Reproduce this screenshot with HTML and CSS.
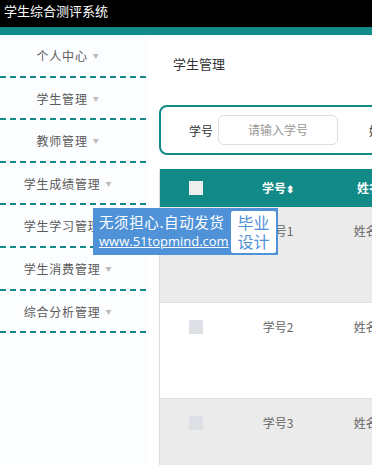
FILE: index.html
```html
<!DOCTYPE html>
<html lang="zh">
<head>
  <meta charset="UTF-8" />
  <title>学生综合测评系统</title>
  <link rel="stylesheet" href="styles.css">
</head>
<body>
  <div class="top">学生综合测评系统</div>
  <div class="band"></div>
  <div class="wrap">
    <ul class="menu">
      <li>个人中心<span class="caret">▼</span></li>
      <li>学生管理<span class="caret">▼</span></li>
      <li>教师管理<span class="caret">▼</span></li>
      <li>学生成绩管理<span class="caret">▼</span></li>
      <li>学生学习管理<span class="caret">▼</span></li>
      <li>学生消费管理<span class="caret">▼</span></li>
      <li>综合分析管理<span class="caret">▼</span></li>
    </ul>
    <div class="main">
      <div class="title">学生管理</div>
      <div class="search">
        <label>学号</label>
        <div class="input">请输入学号</div>
        <label>姓名</label>
        <div class="input">请输入姓名</div>
      </div>
      <div class="table">
        <div class="row head">
          <div class="cell"><span class="box"></span></div>
          <div class="cell">学号<span class="sort">⬍</span></div>
          <div class="cell">姓名</div>
        </div>
        <div class="row">
          <div class="cell"><span class="box"></span></div>
          <div class="cell">学号1</div>
          <div class="cell">姓名1</div>
        </div>
        <div class="row">
          <div class="cell"><span class="box"></span></div>
          <div class="cell">学号2</div>
          <div class="cell">姓名2</div>
        </div>
        <div class="row">
          <div class="cell"><span class="box"></span></div>
          <div class="cell">学号3</div>
          <div class="cell">姓名3</div>
        </div>
      </div>
    </div>
  </div>

  <div class="ad">
    <div class="ad-text">
      <div class="ad-line">无须担心.自动发货</div>
      <div class="ad-url">www.51topmind.com</div>
    </div>
    <div class="ad-tag">毕业<br>设计</div>
  </div>
</body>
</html>
```

FILE: styles.css
```css
* {
  margin: 0;
  padding: 0;
  box-sizing: border-box;
}

body {
  width: 372px;
  height: 465px;
  overflow: hidden;
  position: relative;
  background: #fff;
  font-family: "Noto Sans CJK SC", "Noto Sans", sans-serif;
  font-size: 12px;
  color: #555;
}

.top {
  height: 27px;
  line-height: 22px;
  padding-left: 4px;
  background: #000;
  color: #fff;
  font-size: 13px;
}

.band {
  height: 8px;
  background: #118a88;
}

.wrap {
  display: flex;
  width: 700px;
}

.menu {
  width: 150px;
  flex: none;
  padding-right: 4px;
  background: #fbfdff;
}

.menu li {
  list-style: none;
  height: 42.6px;
  line-height: 41px;
  text-align: center;
  padding-right: 10px;
  border-bottom: 2px dashed #118a88;
  color: #5a5a5a;
  letter-spacing: 0.8px;
}

.caret {
  font-size: 6px;
  color: #bbb;
  margin-left: 5px;
  vertical-align: 3px;
}

.main {
  flex: 1;
  padding-left: 9px;
}

.title {
  height: 70px;
  padding: 20px 0 0 14px;
  line-height: 18px;
  font-size: 13px;
  color: #333;
}

.search {
  display: flex;
  align-items: center;
  height: 50px;
  padding-left: 28px;
  border: 2px solid #118a88;
  border-radius: 8px;
  gap: 5px;
}

.search label {
  color: #333;
  font-size: 12px;
}

.input {
  width: 120px;
  height: 30px;
  line-height: 28px;
  border: 1px solid #ddd;
  border-radius: 6px;
  text-align: center;
  color: #999;
  margin-right: 26px;
}

.table {
  margin-top: 14px;
  border-left: 1px solid #ddd;
}

.row {
  display: grid;
  grid-template-columns: 72px 92px 90px 90px;
  height: 96px;
  padding-top: 16px;
  background: #ebebeb;
  border-bottom: 1px solid #e0e0e0;
  color: #666;
}

.row:nth-child(odd) {
  background: #fff;
}

.row.head {
  height: 38px;
  padding-top: 0;
  align-items: center;
  background: #118a88;
  color: #fff;
  font-weight: bold;
  border: none;
}

.cell {
  line-height: 16px;
  text-align: center;
}

.box {
  display: inline-block;
  width: 14px;
  height: 14px;
  background: #dde0e4;
  vertical-align: -2px;
}

.head .box {
  background: #eee;
}

.sort {
  font-size: 10px;
}

.ad {
  position: absolute;
  left: 93px;
  top: 208px;
  width: 185px;
  height: 47px;
  background: #4f92d8;
  display: flex;
  align-items: center;
  padding: 0 2px 0 6px;
  color: #fff;
}

.ad-text {
  flex: 1;
}

.ad-line {
  font-size: 14.5px;
  line-height: 20px;
  letter-spacing: 0.6px;
}

.ad-url {
  font-family: "Open Sans", sans-serif;
  font-size: 13px;
  line-height: 19px;
  text-decoration: underline;
}

.ad-tag {
  width: 45px;
  height: 42px;
  background: #fff;
  color: #4f92d8;
  font-size: 16px;
  line-height: 19px;
  text-align: center;
  padding-top: 2px;
  border-radius: 2px;
}
```
